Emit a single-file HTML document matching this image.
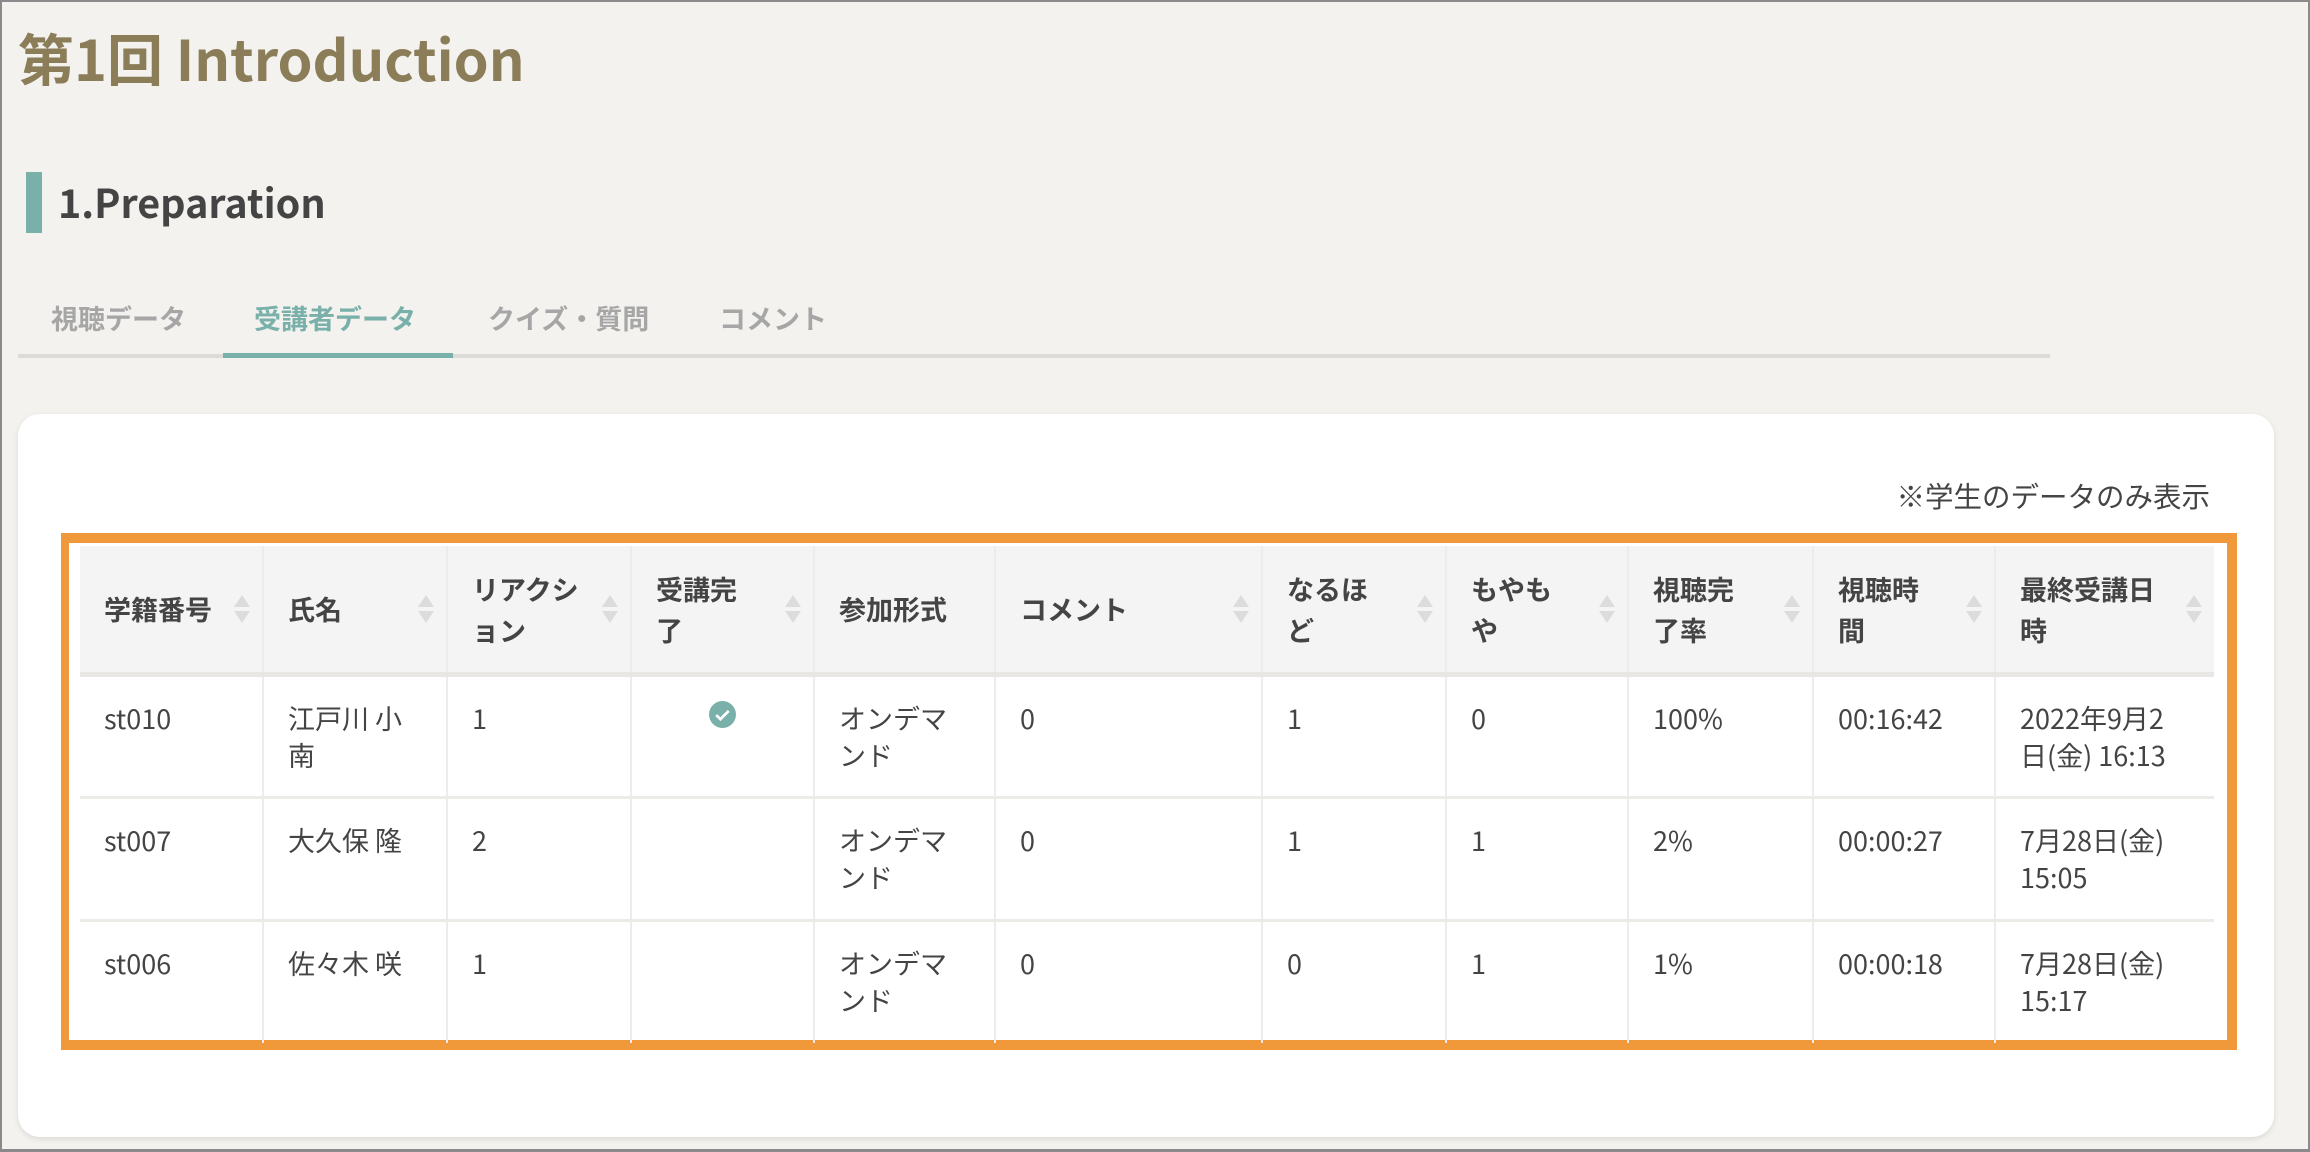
<!DOCTYPE html>
<html><head><meta charset="utf-8"><style>
*{box-sizing:border-box;margin:0;padding:0}
body{width:2310px;height:1152px;background:#f3f2ef;font-family:"Noto Sans CJK JP","Liberation Sans",sans-serif;position:relative;overflow:hidden;border:2px solid #8a8a8a;border-bottom-width:3px}
.title{position:absolute;left:16px;top:14px;font-size:56px;line-height:84px;font-weight:bold;color:#8a7d58}
.bar{position:absolute;left:24px;top:170px;width:16px;height:61px;background:#7ab0aa}
.sub{position:absolute;left:56px;top:170px;font-size:39.5px;line-height:60px;font-weight:bold;color:#444}
.tabline{position:absolute;left:16px;top:352px;width:2032px;height:4px;background:#dcdbd7}
.tabact{position:absolute;left:221px;top:351px;width:230px;height:5px;background:#7ab0aa}
.tab{position:absolute;top:296px;font-size:27px;line-height:40px;font-weight:bold;color:#a6a6a6}
.card{position:absolute;left:16px;top:412px;width:2256px;height:723px;background:#fff;border-radius:22px;box-shadow:0 2px 6px rgba(0,0,0,.1)}
.note{position:absolute;right:98px;top:474px;font-size:28.5px;line-height:40px;color:#444}
.box{position:absolute;left:59px;top:531px;width:2176px;height:517px;border:10px solid #f0993a;border-left-width:8px;border-right-width:10px}
table{position:absolute;left:78px;top:544px;border-collapse:collapse;table-layout:fixed;width:2134px;font-size:27px;color:#444;white-space:nowrap}
td,th{border-left:2px solid #ececec;vertical-align:top;text-align:left;padding:0 24px;line-height:37px;position:relative}
td:first-child,th:first-child{border-left:none}
th{background:#f4f4f4;height:128px;font-weight:bold;vertical-align:middle;border-bottom:5px solid #e8e7e3;line-height:41px}
td{height:123px;padding-top:22px;border-bottom:3px solid #ecebe8}
tr:last-child td{border-bottom:none}
.s{position:absolute;right:12px;top:50%;margin-top:-14px;width:16px;height:28px}
.s:before,.s:after{content:"";position:absolute;left:0;border-left:8px solid transparent;border-right:8px solid transparent}
.s:before{top:0;border-bottom:12px solid #dcdcdc}
.s:after{bottom:0;border-top:12px solid #dcdcdc}
.chk{display:block;margin:2px auto 0;width:27px;height:27px}
</style></head><body>
<div class="title">第1回 Introduction</div>
<div class="bar"></div>
<div class="sub">1.Preparation</div>
<div class="tab" style="left:49px">視聴データ</div>
<div class="tab" style="left:252px;color:#7ab0aa">受講者データ</div>
<div class="tab" style="left:486px">クイズ・質問</div>
<div class="tab" style="left:717px">コメント</div>
<div class="tabline"></div><div class="tabact"></div>
<div class="card"></div>
<div class="note">※学生のデータのみ表示</div>
<div class="box"></div>
<table>
<colgroup><col style="width:183px"><col style="width:184px"><col style="width:184px"><col style="width:183px"><col style="width:181px"><col style="width:267px"><col style="width:184px"><col style="width:182px"><col style="width:185px"><col style="width:182px"><col style="width:219px"></colgroup>
<tr><th>学籍番号<span class="s"></span></th><th>氏名<span class="s"></span></th><th>リアクシ<br>ョン<span class="s"></span></th><th>受講完<br>了<span class="s"></span></th><th>参加形式</th><th>コメント<span class="s"></span></th><th>なるほ<br>ど<span class="s"></span></th><th>もやも<br>や<span class="s"></span></th><th>視聴完<br>了率<span class="s"></span></th><th>視聴時<br>間<span class="s"></span></th><th>最終受講日<br>時<span class="s"></span></th></tr>
<tr><td>st010</td><td>江戸川 小<br>南</td><td>1</td><td><svg class="chk" viewBox="0 0 26 26"><circle cx="13" cy="13" r="13" fill="#7ab0aa"/><path d="M7 13.5l4 4 8-8" stroke="#fff" stroke-width="2.6" fill="none"/></svg></td><td>オンデマ<br>ンド</td><td>0</td><td>1</td><td>0</td><td>100%</td><td>00:16:42</td><td>2022年9月2<br>日(金) 16:13</td></tr>
<tr><td>st007</td><td>大久保 隆</td><td>2</td><td></td><td>オンデマ<br>ンド</td><td>0</td><td>1</td><td>1</td><td>2%</td><td>00:00:27</td><td>7月28日(金)<br>15:05</td></tr>
<tr><td>st006</td><td>佐々木 咲</td><td>1</td><td></td><td>オンデマ<br>ンド</td><td>0</td><td>0</td><td>1</td><td>1%</td><td>00:00:18</td><td>7月28日(金)<br>15:17</td></tr>
</table>
</body></html>
